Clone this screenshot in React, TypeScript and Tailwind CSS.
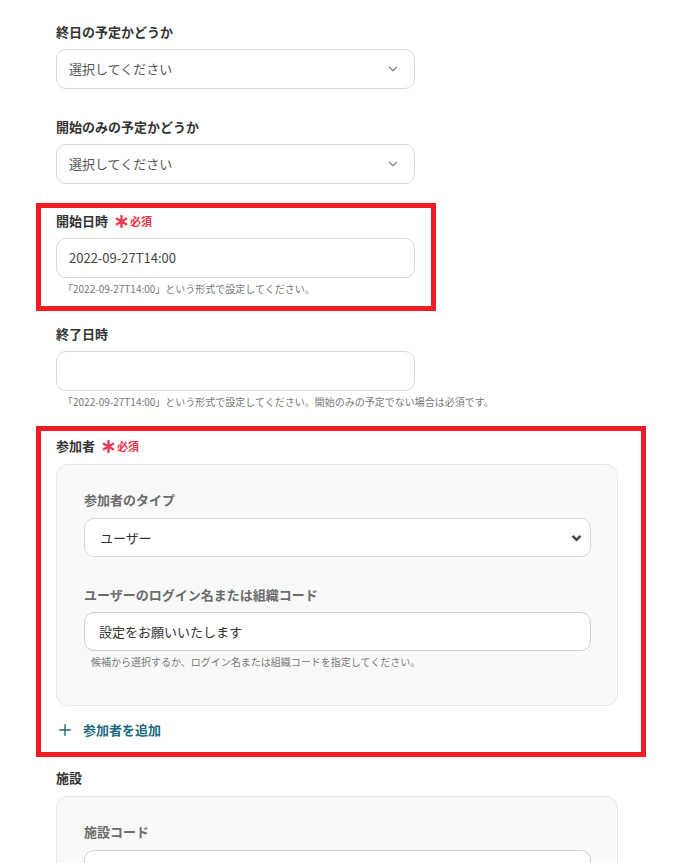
import { ChevronDown, Plus } from "lucide-react";

const Required = () => (
  <span className="ml-[7px] inline-flex items-center gap-[2px] text-[11px] font-bold text-[#e8384f]">
    <svg width="13" height="13" viewBox="0 0 12 12" className="mt-[1px]">
      <g stroke="#e8384f" strokeWidth="2.2" strokeLinecap="round">
        <line x1="6" y1="1" x2="6" y2="11" />
        <line x1="1.7" y1="3.5" x2="10.3" y2="8.5" />
        <line x1="1.7" y1="8.5" x2="10.3" y2="3.5" />
      </g>
    </svg>
    必須
  </span>
);

const Label = ({ children, required }: { children: string; required?: boolean }) => (
  <div className="flex h-5 items-center text-[13px] font-bold leading-5 text-[#333]">
    {children}
    {required && <Required />}
  </div>
);

const SubLabel = ({ children }: { children: string }) => (
  <div className="h-5 text-[13px] font-bold leading-5 text-[#6b6b6b]">{children}</div>
);

const Help = ({ children, className = "pl-[7px]" }: { children: string; className?: string }) => (
  <p className={`mt-[5px] h-3 whitespace-nowrap text-[10px] leading-3 text-[#777] ${className}`}>
    {children}
  </p>
);

const SelectBox = ({ value }: { value: string }) => (
  <div className="flex h-10 w-[359px] items-center justify-between rounded-[10px] border border-[#d3d6dd] bg-white pl-[12px] pr-[14px]">
    <span className="text-[13px] text-[#555]">{value}</span>
    <ChevronDown className="h-[14px] w-[14px] text-[#888]" strokeWidth={2.2} />
  </div>
);

const TextBox = ({ value }: { value?: string }) => (
  <div className="flex h-10 w-[359px] items-center rounded-[10px] border border-[#d3d6dd] bg-white pl-[12px]">
    <span className="text-[13px] text-[#444]">{value}</span>
  </div>
);

const Highlight = ({ className }: { className: string }) => (
  <div className={`pointer-events-none absolute border-[5px] border-[#ee1c25] ${className}`} />
);

export default function App() {
  return (
    <div className="min-h-screen bg-white font-['Noto_Sans_CJK_JP','Noto_Sans',sans-serif]">
      <div className="pl-[56px] pt-[22px]">
        {/* 終日 */}
        <div>
          <div className="mb-[7px]">
            <Label>終日の予定かどうか</Label>
          </div>
          <SelectBox value="選択してください" />
        </div>

        {/* 開始のみ */}
        <div className="mt-[28px]">
          <div className="mb-[7px]">
            <Label>開始のみの予定かどうか</Label>
          </div>
          <SelectBox value="選択してください" />
        </div>

        {/* 開始日時 */}
        <div className="relative mt-[27px] w-[359px]">
          <div className="mb-[7px]">
            <Label required>開始日時</Label>
          </div>
          <TextBox value="2022-09-27T14:00" />
          <Help>「2022-09-27T14:00」という形式で設定してください。</Help>
          <Highlight className="-bottom-[16px] -left-[20px] -right-[21px] -top-[8px]" />
        </div>

        {/* 終了日時 */}
        <div className="mt-[29px]">
          <div className="mb-[7px]">
            <Label>終了日時</Label>
          </div>
          <TextBox />
          <Help>「2022-09-27T14:00」という形式で設定してください。開始のみの予定でない場合は必須です。</Help>
        </div>

        {/* 参加者 */}
        <div className="relative mt-[28px] w-[562px]">
          <div className="mb-[8px]">
            <Label required>参加者</Label>
          </div>
          <div className="rounded-[12px] border border-[#e6e6e6] bg-[#f9f9f9] pb-[37px] pl-[27px] pr-[26px] pt-[25px]">
            <div className="mb-[8px]">
              <SubLabel>参加者のタイプ</SubLabel>
            </div>
            <div className="flex h-[39px] items-center justify-between rounded-[10px] border border-[#d3d6dd] bg-white pl-[15px] pr-[8px]">
              <span className="text-[13px] text-[#333]">ユーザー</span>
              <svg width="11" height="8" viewBox="0 0 11 8">
                <path d="M1.5 1.8 5.5 5.8 9.5 1.8" fill="none" stroke="#3f444c" strokeWidth="2.4" />
              </svg>
            </div>
            <div className="mb-[7px] mt-[28px]">
              <SubLabel>ユーザーのログイン名または組織コード</SubLabel>
            </div>
            <div className="flex h-[39px] items-center rounded-[10px] border border-[#cfcfcf] bg-white pl-[14px]">
              <span className="text-[13px] text-[#333]">設定をお願いいたします</span>
            </div>
            <Help>候補から選択するか、ログイン名または組織コードを指定してください。</Help>
          </div>
          <button className="mt-[14px] flex h-5 items-center gap-[9px] text-[13px] font-bold text-[#1b6a80]">
            <Plus className="h-[18px] w-[18px]" strokeWidth={1.9} />
            参加者を追加
          </button>
          <Highlight className="-bottom-[17px] -left-[20px] -right-[28px] -top-[10px]" />
        </div>

        {/* 施設 */}
        <div className="mt-[28px] w-[562px]">
          <div className="mb-[8px]">
            <Label>施設</Label>
          </div>
          <div className="rounded-[12px] border border-[#e6e6e6] bg-[#f9f9f9] pb-[37px] pl-[27px] pr-[26px] pt-[25px]">
            <div className="mb-[8px]">
              <SubLabel>施設コード</SubLabel>
            </div>
            <div className="h-[39px] rounded-[10px] border border-[#cfcfcf] bg-white" />
          </div>
        </div>
      </div>
    </div>
  );
}
